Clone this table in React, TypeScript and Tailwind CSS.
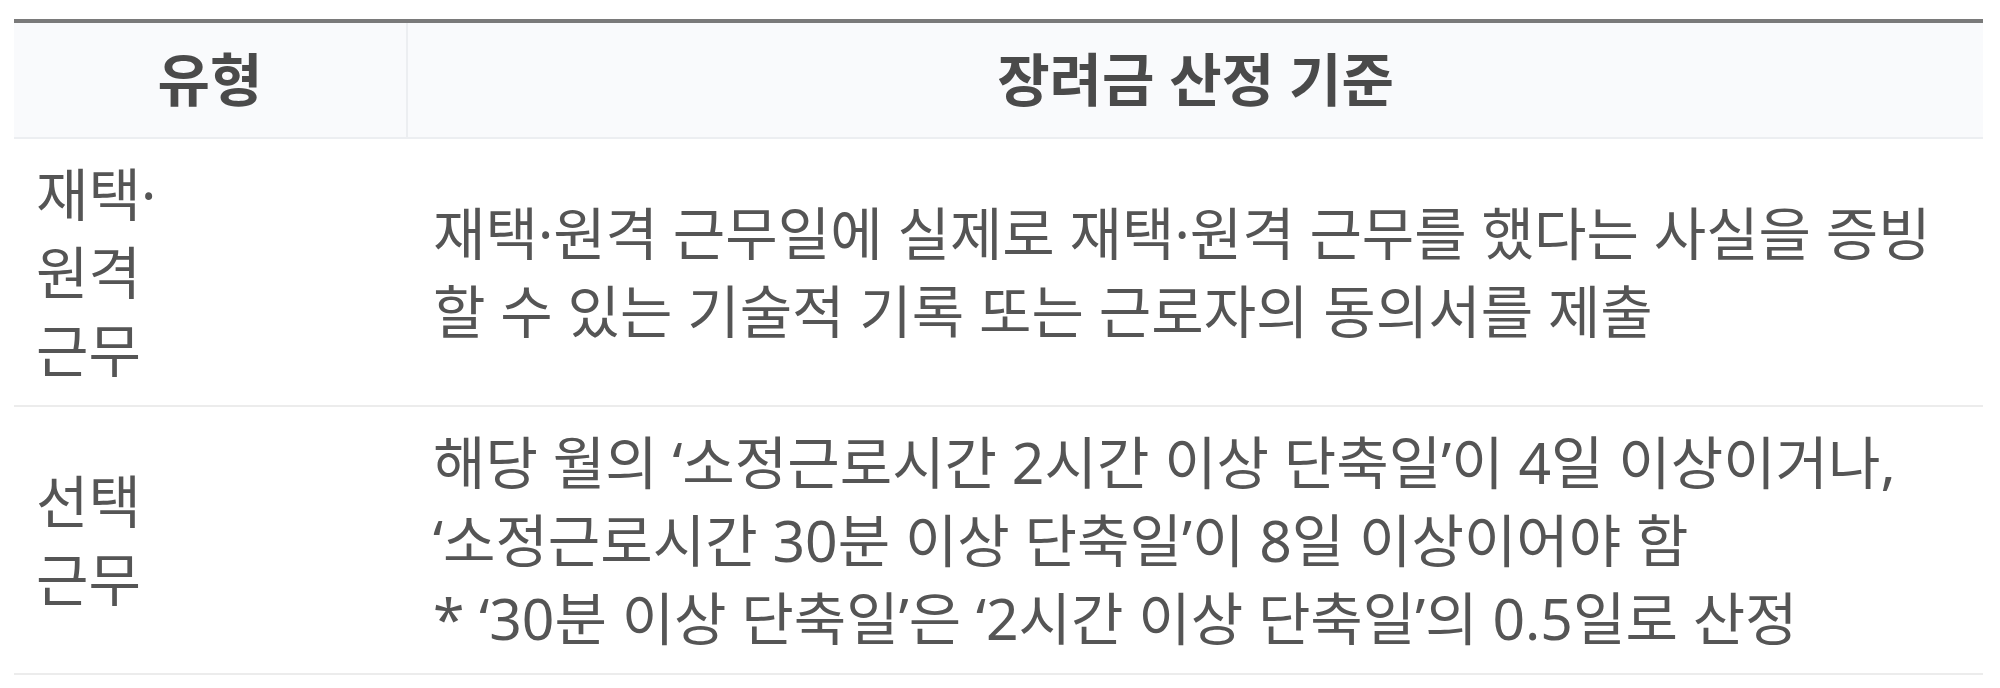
const font = { fontFamily: '"Noto Sans", "Noto Sans CJK KR", sans-serif' };

const rows = [
  {
    type: ["재택·", "원격", "근무"],
    lines: [
      "재택·원격 근무일에 실제로 재택·원격 근무를 했다는 사실을 증빙",
      "할 수 있는 기술적 기록 또는 근로자의 동의서를 제출",
    ],
  },
  {
    type: ["선택", "근무"],
    lines: [
      "해당 월의 ‘소정근로시간 2시간 이상 단축일’이 4일 이상이거나,",
      "‘소정근로시간 30분 이상 단축일’이 8일 이상이어야 함",
      "* ‘30분 이상 단축일’은 ‘2시간 이상 단축일’의 0.5일로 산정",
    ],
  },
];

export default function App() {
  return (
    <div className="w-full h-[688px] bg-white pt-[19px] pl-[14px] pr-[17px]" style={font}>
      {/* table */}
      <div className="border-t-4 border-[#7a7a7a]">
        {/* header */}
        <div className="grid grid-cols-[394px_1fr] h-[116px] bg-[#f9fafc] border-b-2 border-[#eceef1] text-[#4a4a4a] text-[57px] font-semibold">
          <div className="flex items-center justify-center border-r-2 border-[#eceef1]">유형</div>
          <div className="flex items-center justify-center">장려금 산정 기준</div>
        </div>

        {/* body */}
        {rows.map((row, i) => (
          <div
            key={i}
            className="grid grid-cols-[394px_1fr] h-[268px] border-b-2 border-[#ececec] text-[#555555] text-[57px] leading-[78px]"
          >
            <div className="flex flex-col justify-center pl-[22px]">
              {row.type.map((t, j) => (
                <span key={j} className="whitespace-nowrap">{t}</span>
              ))}
            </div>
            <div className="flex flex-col justify-center pl-[25px]">
              {row.lines.map((l, j) => (
                <span key={j} className="whitespace-nowrap">{l}</span>
              ))}
            </div>
          </div>
        ))}
      </div>
    </div>
  );
}
